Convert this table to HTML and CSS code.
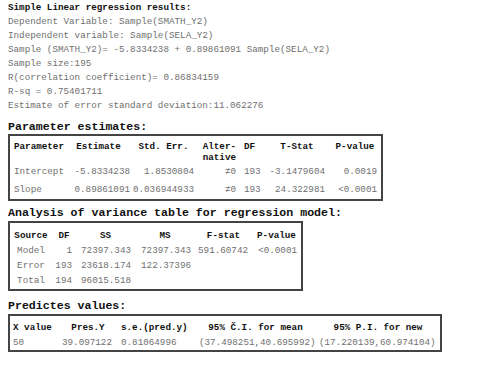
FILE: index.html
```html
<!DOCTYPE html>
<html>
<head>
<meta charset="utf-8">
<link rel="stylesheet" href="styles.css">
</head>
<body>
<div class="page">
  <div class="summary">
    <div class="row title">Simple Linear regression results:</div>
    <div class="row">Dependent Variable: Sample(SMATH_Y2)</div>
    <div class="row">Independent variable: Sample(SELA_Y2)</div>
    <div class="row">Sample (SMATH_Y2)= -5.8334238 + 0.89861091 Sample(SELA_Y2)</div>
    <div class="row">Sample size:195</div>
    <div class="row">R(correlation coefficient)= 0.86834159</div>
    <div class="row">R-sq = 0.75401711</div>
    <div class="row">Estimate of error standard deviation:11.062276</div>
  </div>

  <div class="section-title first">Parameter estimates:</div>
  <table class="grid t1">
    <colgroup>
      <col class="w56"><col class="w65"><col class="w65"><col class="w44"><col class="w25"><col class="w64"><col class="w52">
    </colgroup>
    <tr>
      <th>Parameter</th><th>Estimate</th><th>Std. Err.</th><th>Alter-<br>native</th><th>DF</th><th>T-Stat</th><th>P-value</th>
    </tr>
    <tr>
      <td>Intercept</td><td>-5.8334238</td><td>1.8530804</td><td>≠0</td><td>193</td><td>-3.1479604</td><td>0.0019</td>
    </tr>
    <tr>
      <td>Slope</td><td>0.89861091</td><td>0.036944933</td><td>≠0</td><td>193</td><td>24.322981</td><td>&lt;0.0001</td>
    </tr>
  </table>

  <div class="section-title second">Analysis of variance table for regression model:</div>
  <table class="grid t2">
    <colgroup>
      <col class="w42"><col class="w24"><col class="w59"><col class="w60"><col class="w57"><col class="w49">
    </colgroup>
    <tr>
      <th>Source</th><th>DF</th><th>SS</th><th>MS</th><th>F-stat</th><th>P-value</th>
    </tr>
    <tr>
      <td>Model</td><td>1</td><td>72397.343</td><td>72397.343</td><td>591.60742</td><td>&lt;0.0001</td>
    </tr>
    <tr>
      <td>Error</td><td>193</td><td>23618.174</td><td>122.37396</td><td></td><td></td>
    </tr>
    <tr>
      <td>Total</td><td>194</td><td>96015.518</td><td></td><td></td><td></td>
    </tr>
  </table>

  <div class="section-title third">Predictes values:</div>
  <table class="grid t3">
    <colgroup>
      <col class="w48"><col class="w60"><col class="w77"><col class="w121"><col class="w124">
    </colgroup>
    <tr>
      <th>X value</th><th>Pres.Y</th><th>s.e.(pred.y)</th><th>95% Č.I. for mean</th><th>95% P.I. for new</th>
    </tr>
    <tr>
      <td>50</td><td>39.097122</td><td>0.81064996</td><td>(37.498251,40.695992)</td><td>(17.220139,60.974104)</td>
    </tr>
  </table>
</div>
</body>
</html>
```

FILE: styles.css
```css
body {
  margin: 0;
  background: #ffffff;
  font-family: "Liberation Mono", "DejaVu Sans Mono", monospace;
  font-size: 9.25px;
  color: #707070;
}

.page {
  padding: 1px 8px;
}

.summary .row {
  line-height: 14px;
  white-space: pre;
}

.summary .title {
  font-weight: bold;
  color: #111111;
}

.section-title {
  font-size: 11.6px;
  font-weight: bold;
  color: #111111;
  line-height: 14px;
  white-space: pre;
}

.section-title.first { margin-top: 7px; }
.section-title.second { margin-top: 5px; margin-bottom: 1px; }
.section-title.third { margin-top: 8px; margin-bottom: 1px; }

.grid {
  border: 2px solid #444444;
  border-collapse: separate;
  border-spacing: 0;
  table-layout: fixed;
}

.grid th,
.grid td {
  padding: 0;
  white-space: nowrap;
  vertical-align: top;
  overflow: visible;
}

.grid th {
  font-weight: bold;
  color: #111111;
  text-align: center;
}

.w24 { width: 24px; }
.w25 { width: 25px; }
.w42 { width: 42px; }
.w44 { width: 44px; }
.w48 { width: 48px; }
.w49 { width: 49px; }
.w52 { width: 52px; }
.w56 { width: 56px; }
.w57 { width: 57px; }
.w59 { width: 59px; }
.w60 { width: 60px; }
.w64 { width: 64px; }
.w65 { width: 65px; }
.w77 { width: 77px; }
.w121 { width: 121px; }
.w124 { width: 124px; }

/* Parameter estimates */
.t1 { width: 375px; }
.t1 th { line-height: 11px; padding-top: 5px; }
.t1 td { line-height: 18px; text-align: right; padding-right: 4px; }
.t1 th:nth-child(1) { text-align: left; padding-left: 4px; }
.t1 th:nth-child(4) { text-align: right; padding-right: 4px; }
.t1 th:nth-child(5) { text-align: left; padding-left: 4px; }
.t1 td:nth-child(1) { text-align: left; padding-left: 4px; padding-right: 0; }
.t1 td:nth-child(2) { padding-right: 1px; }
.t1 td:nth-child(3) { padding-right: 2px; }
.t1 td:nth-child(5) { text-align: left; padding-left: 4px; padding-right: 0; }

/* ANOVA */
.t2 { width: 295px; }
.t2 th { line-height: 15px; padding-top: 5px; }
.t2 td { line-height: 15px; text-align: right; padding-right: 4px; }
.t2 td:nth-child(1) { text-align: center; padding-right: 0; }
.t2 tr:last-child td { padding-bottom: 1px; }

/* Predicted values */
.t3 { width: 434px; }
.t3 th { line-height: 15px; padding-top: 4px; }
.t3 td { line-height: 15px; text-align: left; padding-left: 3px; }
.t3 th:nth-child(1),
.t3 th:nth-child(3) { text-align: left; padding-left: 3px; }
.t3 td:nth-child(2),
.t3 td:nth-child(4) { padding-left: 4px; }
```
